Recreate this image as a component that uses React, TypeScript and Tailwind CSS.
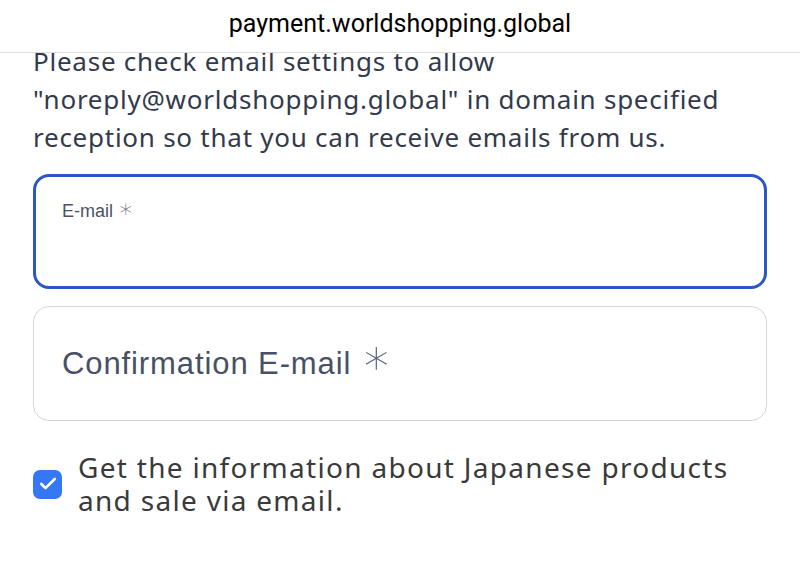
import { Check } from "lucide-react"

const star = { fontFamily: '"DejaVu Sans", sans-serif' }

function Field({
  label,
  focused,
}: {
  label: string
  focused?: boolean
}) {
  if (focused) {
    return (
      <div className="h-[115px] rounded-[16px] border-[3px] border-[#2b57c4] bg-white px-[26px] pt-[22px]">
        <span className="text-[18px] leading-[24px] text-[#4a5366]">
          {label}{" "}
          <span className="text-[25px] leading-[20px] font-extralight text-[#5b6478]" style={star}>
            ∗
          </span>
        </span>
      </div>
    )
  }
  return (
    <div className="flex h-[115px] items-center rounded-[16px] border-[1.5px] border-[#d6d6d6] bg-white px-[28px] pb-[6px]">
      <span className="text-[31px] leading-[36px] tracking-[0.9px] text-[#485066]">
        {label}{" "}
        <span className="text-[50px] leading-[36px] font-extralight text-[#5b6478]" style={star}>
          ∗
        </span>
      </span>
    </div>
  )
}

export default function App() {
  return (
    <div
      className="flex h-[581px] w-[800px] flex-col overflow-hidden bg-white"
      style={{ fontFamily: '"Liberation Sans", Arial, sans-serif' }}
    >
      <header className="flex h-[53px] shrink-0 items-center justify-center border-b border-[#dedede] bg-white pb-[4px]">
        <span
          className="text-[25px] text-black"
          style={{ fontFamily: 'Roboto, "Liberation Sans", sans-serif' }}
        >
          payment.worldshopping.global
        </span>
      </header>

      <div className="flex-1 overflow-hidden">
        <div className="-mt-[11px] flex flex-col px-[33px]">
          <p
            className="text-[26px] leading-[38px] tracking-[0.75px] text-[#323a4b]"
            style={{ fontFamily: '"Noto Sans", "Noto Sans CJK JP", sans-serif' }}
          >
            Please check email settings to allow
            <br />
            "noreply@worldshopping.global" in domain specified
            <br />
            reception so that you can receive emails from us.
          </p>

          <div className="mt-[18px] flex flex-col gap-[17px]">
            <Field label="E-mail" focused />
            <Field label="Confirmation E-mail" />
          </div>

          <label className="mt-[30px] flex items-center gap-[16px]">
            <span className="flex h-[29px] w-[29px] shrink-0 items-center justify-center rounded-[7px] bg-[#3478f6]">
              <Check className="h-[20px] w-[20px] text-white" strokeWidth={3.2} />
            </span>
            <span
              className="text-[28px] leading-[33px] tracking-[1.3px] text-[#3a3a3a]"
              style={{ fontFamily: '"Noto Sans", "Noto Sans CJK JP", sans-serif' }}
            >
              Get the information about Japanese products
              <br />
              and sale via email.
            </span>
          </label>
        </div>
      </div>
    </div>
  )
}
